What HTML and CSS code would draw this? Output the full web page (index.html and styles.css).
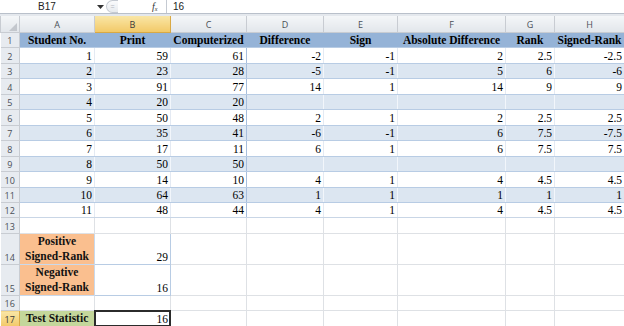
FILE: index.html
```html
<!DOCTYPE html>
<html>
<head>
<meta charset="utf-8">
<link rel="stylesheet" href="styles.css">
</head>
<body>
<div class="fbar">
  <div class="namebox">B17</div>
  <div class="dd"><svg width="7" height="4" viewBox="0 0 7 4"><path d="M0 0H7L3.5 4Z" fill="#333"/></svg></div>
  <div class="pill"><span class="eq">=</span></div>
  <div class="fx">f<sub>x</sub></div>
  <div class="fval">16</div>
</div>
<div class="strip"></div>
<table class="sheet">
  <colgroup>
    <col class="c0"><col class="ca"><col class="cb"><col class="cc"><col class="cd"><col class="ce"><col class="cf"><col class="cg"><col class="ch">
  </colgroup>
  <tr class="colhdr">
    <th class="corner"><svg width="8" height="8" viewBox="0 0 8 8"><path d="M8 0V8H0Z" fill="#c3c7cd"/></svg></th>
    <th>A</th><th class="sel">B</th><th>C</th><th>D</th><th>E</th><th>F</th><th>G</th><th>H</th>
  </tr>
  <tr class="r hd"><th>1</th><td>Student No.</td><td>Print</td><td>Computerized</td><td>Difference</td><td>Sign</td><td>Absolute Difference</td><td>Rank</td><td>Signed-Rank</td></tr>
  <tr class="r w"><th>2</th><td>1</td><td>59</td><td class="cd">61</td><td>-2</td><td>-1</td><td>2</td><td>2.5</td><td>-2.5</td></tr>
  <tr class="r b"><th>3</th><td>2</td><td>23</td><td class="cd">28</td><td>-5</td><td>-1</td><td>5</td><td>6</td><td>-6</td></tr>
  <tr class="r w"><th>4</th><td>3</td><td>91</td><td class="cd">77</td><td>14</td><td>1</td><td>14</td><td>9</td><td>9</td></tr>
  <tr class="r b"><th>5</th><td>4</td><td>20</td><td class="cd">20</td><td></td><td></td><td></td><td></td><td></td></tr>
  <tr class="r w"><th>6</th><td>5</td><td>50</td><td class="cd">48</td><td>2</td><td>1</td><td>2</td><td>2.5</td><td>2.5</td></tr>
  <tr class="r b"><th>7</th><td>6</td><td>35</td><td class="cd">41</td><td>-6</td><td>-1</td><td>6</td><td>7.5</td><td>-7.5</td></tr>
  <tr class="r w"><th>8</th><td>7</td><td>17</td><td class="cd">11</td><td>6</td><td>1</td><td>6</td><td>7.5</td><td>7.5</td></tr>
  <tr class="r b"><th>9</th><td>8</td><td>50</td><td class="cd">50</td><td></td><td></td><td></td><td></td><td></td></tr>
  <tr class="r w"><th>10</th><td>9</td><td>14</td><td class="cd">10</td><td>4</td><td>1</td><td>4</td><td>4.5</td><td>4.5</td></tr>
  <tr class="r b"><th>11</th><td>10</td><td>64</td><td class="cd">63</td><td>1</td><td>1</td><td>1</td><td>1</td><td>1</td></tr>
  <tr class="r w last"><th>12</th><td>11</td><td>48</td><td class="cd">44</td><td>4</td><td>1</td><td>4</td><td>4.5</td><td>4.5</td></tr>
  <tr class="r e"><th>13</th><td></td><td></td><td></td><td></td><td></td><td></td><td></td><td></td></tr>
  <tr class="r e tall"><th>14</th><td class="lbl orange">Positive<br>Signed-Rank</td><td class="boxed">29</td><td></td><td></td><td></td><td></td><td></td><td></td></tr>
  <tr class="r e tall"><th>15</th><td class="lbl orange">Negative<br>Signed-Rank</td><td class="boxed">16</td><td></td><td></td><td></td><td></td><td></td><td></td></tr>
  <tr class="r e"><th>16</th><td></td><td></td><td></td><td></td><td></td><td></td><td></td><td></td></tr>
  <tr class="r e"><th class="sel">17</th><td class="lbl green">Test Statistic</td><td class="active">16<span class="selbox"></span></td><td></td><td></td><td></td><td></td><td></td><td></td></tr>
</table>
</body>
</html>
```
FILE: styles.css
```css
html, body {
  margin: 0;
  padding: 0;
  background: #fff;
}
body {
  width: 624px;
  height: 326px;
  overflow: hidden;
}
.fbar {
  height: 13px;
  display: flex;
  align-items: center;
  font-family: "Liberation Sans", Arial, sans-serif;
  font-size: 10px;
  color: #222;
  background: #fff;
  border-bottom: 1px solid #b9c0ca;
}
.namebox {
  width: 59px;
  padding-left: 38px;
  box-sizing: content-box;
}
.dd {
  width: 9px;
  display: flex;
  align-items: center;
  justify-content: flex-start;
}
.pill {
  width: 12px;
  height: 13px;
  margin-left: 0;
  border: 1px solid #c5cad2;
  border-right: none;
  border-radius: 7px 0 0 7px;
  box-sizing: border-box;
  background: linear-gradient(#fafbfc, #e7eaee);
  display: flex;
  align-items: center;
  justify-content: center;
}
.eq {
  font-size: 7px;
  color: #b5b9bf;
  line-height: 1;
}
.fx {
  width: 14px;
  margin-left: 34px;
  font-family: "Liberation Serif", "Times New Roman", serif;
  font-style: italic;
  font-size: 10px;
  color: #333;
  line-height: 13px;
  height: 13px;
  border-right: 1px solid #c5cad2;
}
.fx sub {
  font-size: 6px;
  vertical-align: -1px;
}
.fval {
  padding-left: 6px;
}
.strip {
  height: 2px;
  background: #e4e8ed;
}
.sheet {
  table-layout: fixed;
  border-collapse: collapse;
  width: 624px;
}
.c0 { width: 19px; }
col.ca { width: 75px; }
col.cb { width: 76px; }
col.cc { width: 76px; }
col.cd { width: 77px; }
col.ce { width: 74px; }
col.cf { width: 108px; }
col.cg { width: 49px; }
col.ch { width: 70px; }

.sheet th, .sheet td {
  padding: 0;
  overflow: hidden;
  white-space: nowrap;
}
.colhdr th {
  height: 15px;
  font-family: "Open Sans", "Liberation Sans", sans-serif;
  font-weight: normal;
  font-size: 9px;
  color: #4a4f57;
  text-align: center;
  vertical-align: middle;
  background: linear-gradient(#f4f6f8, #e2e6eb);
  border: 1px solid #c8ccd2;
  border-top: none;
  line-height: 13px;
}
.colhdr th.corner {
  text-align: right;
  vertical-align: bottom;
  padding: 0 2px 1px 0;
  line-height: 0;
}
.colhdr th.sel,
.r th.sel {
  background: linear-gradient(#f9e6a6, #f2c968);
  color: #3a3a3a;
  border-color: #d9a944;
}
.r {
  height: 15.46px;
}
.r.tall {
  height: 30.8px;
}
.r th {
  font-family: "Open Sans", "Liberation Sans", sans-serif;
  font-weight: normal;
  font-size: 9px;
  color: #4a4f57;
  text-align: center;
  vertical-align: bottom;
  line-height: 13px;
  background: #e7ebf0;
  border: 1px solid #c8ccd2;
  border-left: none;
}
.r td {
  font-family: "Liberation Serif", "Times New Roman", serif;
  font-size: 11.5px;
  color: #000;
  text-align: right;
  vertical-align: bottom;
  line-height: 13px;
  padding-right: 2px;
  border: 1px solid #dee1e5;
}
.hd td {
  background: #95b3d7;
  font-weight: bold;
  text-align: center;
  padding: 0;
  border-color: #95b3d7;
  border-bottom-color: #b8cce4;
}
.w td {
  background: #fff;
  border-color: #e4eaf3;
  border-bottom-color: #b8cce4;
}
.b td {
  background: #dce6f1;
  border-color: #f2f6fb;
  border-bottom-color: #b8cce4;
}
.r td.cd {
  border-right-color: #a7bfdd;
}
.last td {
  border-bottom-color: #c9d6e6;
}
.r td.lbl {
  font-weight: bold;
  text-align: center;
  padding: 0;
  white-space: normal;
  line-height: 15px;
  color: #111;
}
.orange {
  background: #fabf8f;
  border-color: #c9d9ec !important;
}
.green {
  background: #c4d79b;
}
.r td.boxed {
  border-color: #b8cce4;
}
.r td.active {
  position: relative;
  overflow: visible;
}
.selbox {
  position: absolute;
  left: -1px;
  top: -1px;
  right: -1px;
  bottom: -1px;
  border: 2px solid #2b2b2b;
  pointer-events: none;
}
```
